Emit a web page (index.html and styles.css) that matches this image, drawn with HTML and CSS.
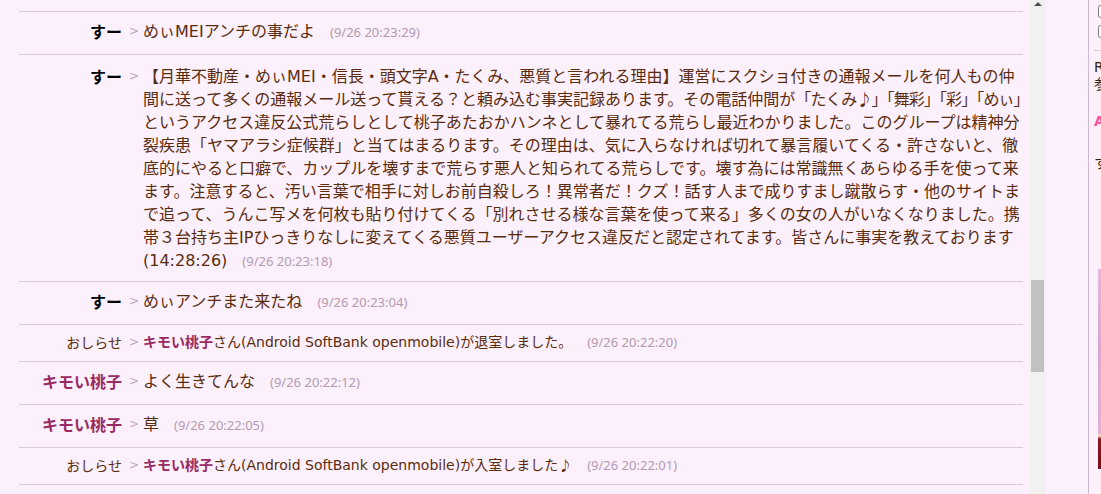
FILE: index.html
```html
<!DOCTYPE html>
<html lang="ja">
<head>
<meta charset="utf-8">
<title>チャットログ</title>
<link rel="stylesheet" href="styles.css">
</head>
<body>
<div class="page">
  <div class="log">
    <ul class="rows">
      <li class="row">
        <span class="name">すー</span><span class="sep">&gt;</span>
        <div class="body">めぃMEIアンチの事だよ<span class="time">(9/26 20:23:29)</span></div>
      </li>
      <li class="row multi">
        <span class="name">すー</span><span class="sep">&gt;</span>
        <div class="body long">【月華不動産・めぃMEI・信長・頭文字A・たくみ、悪質と言われる理由】運営にスクショ付きの通報メールを何人もの仲<br>間に送って多くの通報メール送って貰える？と頼み込む事実記録あります。その電話仲間が<span class="tight">「たくみ<span class="cjk">♪</span>」「舞彩」「彩」「めぃ」</span><br>というアクセス違反公式荒らしとして桃子あたおかハンネとして暴れてる荒らし最近わかりました。このグループは精神分<br>裂疾患「ヤマアラシ症候群」と当てはまるります。その理由は、気に入らなければ切れて暴言履いてくる・許さないと、徹<br>底的にやると口癖で、カップルを壊すまで荒らす悪人と知られてる荒らしです。壊す為には常識無くあらゆる手を使って来<br>ます。注意すると、汚い言葉で相手に対しお前自殺しろ！異常者だ！クズ！話す人まで成りすまし蹴散らす・他のサイトま<br>で追って、うんこ写メを何枚も貼り付けてくる「別れさせる様な言葉を使って来る」多くの女の人がいなくなりました。携<br>帯３台持ち主IPひっきりなしに変えてくる悪質ユーザーアクセス違反だと認定されてます。皆さんに事実を教えております<br>(14:28:26)<span class="time">(9/26 20:23:18)</span></div>
      </li>
      <li class="row">
        <span class="name">すー</span><span class="sep">&gt;</span>
        <div class="body">めぃアンチまた来たね<span class="time">(9/26 20:23:04)</span></div>
      </li>
      <li class="row notice">
        <span class="name">おしらせ</span><span class="sep">&gt;</span>
        <div class="body"><b class="who">キモい桃子</b>さん(Android SoftBank openmobile)が退室しました。<span class="time">(9/26 20:22:20)</span></div>
      </li>
      <li class="row">
        <span class="name pink">キモい桃子</span><span class="sep">&gt;</span>
        <div class="body">よく生きてんな<span class="time">(9/26 20:22:12)</span></div>
      </li>
      <li class="row">
        <span class="name pink">キモい桃子</span><span class="sep">&gt;</span>
        <div class="body">草<span class="time">(9/26 20:22:05)</span></div>
      </li>
      <li class="row notice">
        <span class="name">おしらせ</span><span class="sep">&gt;</span>
        <div class="body"><b class="who">キモい桃子</b>さん(Android SoftBank openmobile)が入室しました<span class="cjk">♪</span><span class="time">(9/26 20:22:01)</span></div>
      </li>
    </ul>
  </div>
  <div class="scrollbar">
    <div class="arrow"></div>
    <div class="thumb"></div>
  </div>
  <aside class="side">
    <label class="opt"><input type="checkbox"></label>
    <label class="opt"><input type="checkbox"></label>
    <div class="side-info">
      <p class="side-text">Room<br>参加者一覧</p>
      <p class="side-admin">Admin</p>
      <p class="side-text">すー</p>
      <div class="banner"></div>
    </div>
  </aside>
</div>
</body>
</html>
```
FILE: styles.css
```css
* {
  box-sizing: border-box;
}

html, body {
  margin: 0;
  padding: 0;
  background: #fcf0fc;
}

.page {
  display: flex;
  width: 1101px;
  height: 494px;
  overflow: hidden;
  background: #fcf0fc;
  font-family: "DejaVu Sans", "Noto Sans CJK JP", sans-serif;
  color: #5a2c0e;
}

.log {
  width: 1029px;
  flex: none;
  padding: 11px 6px 0 19px;
}

.rows {
  list-style: none;
  margin: 0;
  padding: 0;
  border-top: 1px solid #dcc9dc;
}

.row {
  display: grid;
  grid-template-columns: 103px 21px 1fr;
  align-items: start;
  padding: 8px 0 11px;
  border-bottom: 1px solid #dcc9dc;
  font-size: 16px;
  line-height: 23px;
}

.row.multi {
  padding: 10px 0 9px;
}

.name {
  text-align: right;
  font-weight: bold;
  color: #000;
  font-family: "Noto Sans CJK JP", sans-serif;
}

.name.pink {
  color: #982c62;
}

.sep {
  padding-left: 7px;
  font-size: 12px;
  color: #bda8bd;
  font-family: "DejaVu Sans", sans-serif;
}

.body {
  min-width: 0;
}

.long {
  white-space: nowrap;
}

.tight {
  letter-spacing: -0.9px;
}

.cjk {
  font-family: "Noto Sans CJK JP", sans-serif;
  line-height: 1;
}

.time {
  margin-left: 15px;
  font-family: "Noto Sans", sans-serif;
  font-size: 13px;
  line-height: 1;
  color: #b39bb0;
}

.row.notice {
  font-size: 14px;
  line-height: 18px;
  padding: 8px 0 10px;
}

.notice .name {
  font-weight: normal;
  color: #5a2c0e;
}

.who {
  font-family: "Noto Sans CJK JP", sans-serif;
  line-height: 1;
  color: #982c62;
}

.scrollbar {
  width: 17px;
  flex: none;
  background: #f1f1f1;
  display: flex;
  flex-direction: column;
  align-items: center;
  padding-top: 2px;
}

.arrow {
  width: 0;
  height: 0;
  border-left: 4px solid transparent;
  border-right: 4px solid transparent;
  border-bottom: 4px solid #505050;
}

.thumb {
  width: 13px;
  height: 92px;
  margin-top: 274px;
  background: #c1c1c1;
}

.side {
  flex: none;
  width: 300px;
  margin-left: 42px;
  border-left: 1px solid #cdb9d0;
  padding: 2px 0 0 5px;
}

.opt {
  display: block;
  height: 20px;
}

.opt input {
  margin: 3px 3px 3px 4px;
  width: 13px;
  height: 13px;
}

.side-info {
  margin-top: 8px;
  border-top: 1px solid #dcc9dc;
  padding-top: 8px;
}

.side-info p {
  margin: 0;
}

.side-text {
  font-size: 14px;
  line-height: 17px;
  color: #3a1c08;
  margin-bottom: 20px !important;
}

.side-admin {
  font-size: 14px;
  line-height: 17px;
  font-weight: bold;
  color: #ff4fa0;
  margin-bottom: 25px !important;
}

.banner {
  margin: 97px 0 0 4px;
  width: 200px;
  height: 200px;
  background: linear-gradient(180deg, #e6b4e0 0%, #d8a6d8 40%, #e0b0dc 82%, #f4e2b0 83.5%, #8c1420 85%, #7a0c18 100%);
}
```
